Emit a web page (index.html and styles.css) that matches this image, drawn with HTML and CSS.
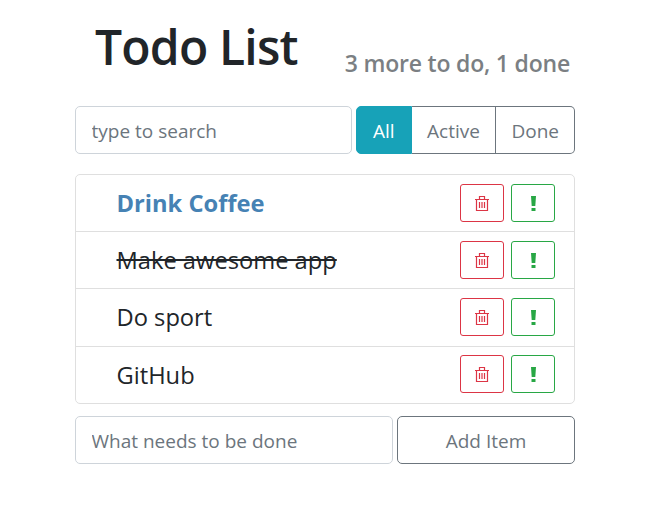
FILE: index.html
```html
<!DOCTYPE html>
<html lang="en">
<head>
    <meta charset="UTF-8">
    <title>Todo List</title>
    <link rel="stylesheet" href="styles.css">
</head>
<body>
    <div class="todo-app">
        <div class="app-header">
            <h1>Todo List</h1>
            <h2>3 more to do, 1 done</h2>
        </div>

        <div class="top-panel">
            <input type="text" class="form-input search-input" placeholder="type to search">
            <div class="filter-group">
                <button class="btn-filter active">All</button>
                <button class="btn-filter">Active</button>
                <button class="btn-filter">Done</button>
            </div>
        </div>

        <ul class="todo-list">
            <li class="todo-item">
                <span class="todo-label important">Drink Coffee</span>
                <button class="btn-icon btn-danger"><svg class="icon-trash" viewBox="0 0 14 15"><path d="M0 3.500h14M4.500 3V.5h5V3M1.500 3.500v11h11v-11M4.500 6v6M7 6v6M9.500 6v6"/></svg></button>
                <button class="btn-icon btn-success"><svg class="icon-mark" viewBox="0 0 5 15"><path d="M0 0h5L4.300 10H.7zM.5 12h4v3h-4z"/></svg></button>
            </li>
            <li class="todo-item">
                <span class="todo-label done">Make awesome app</span>
                <button class="btn-icon btn-danger"><svg class="icon-trash" viewBox="0 0 14 15"><path d="M0 3.500h14M4.500 3V.5h5V3M1.500 3.500v11h11v-11M4.500 6v6M7 6v6M9.500 6v6"/></svg></button>
                <button class="btn-icon btn-success"><svg class="icon-mark" viewBox="0 0 5 15"><path d="M0 0h5L4.300 10H.7zM.5 12h4v3h-4z"/></svg></button>
            </li>
            <li class="todo-item">
                <span class="todo-label">Do sport</span>
                <button class="btn-icon btn-danger"><svg class="icon-trash" viewBox="0 0 14 15"><path d="M0 3.500h14M4.500 3V.5h5V3M1.500 3.500v11h11v-11M4.500 6v6M7 6v6M9.500 6v6"/></svg></button>
                <button class="btn-icon btn-success"><svg class="icon-mark" viewBox="0 0 5 15"><path d="M0 0h5L4.300 10H.7zM.5 12h4v3h-4z"/></svg></button>
            </li>
            <li class="todo-item">
                <span class="todo-label">GitHub</span>
                <button class="btn-icon btn-danger"><svg class="icon-trash" viewBox="0 0 14 15"><path d="M0 3.500h14M4.500 3V.5h5V3M1.500 3.500v11h11v-11M4.500 6v6M7 6v6M9.500 6v6"/></svg></button>
                <button class="btn-icon btn-success"><svg class="icon-mark" viewBox="0 0 5 15"><path d="M0 0h5L4.300 10H.7zM.5 12h4v3h-4z"/></svg></button>
            </li>
        </ul>

        <form class="add-form">
            <input type="text" class="form-input add-input" placeholder="What needs to be done">
            <button type="button" class="btn-add">Add Item</button>
        </form>
    </div>
</body>
</html>
```

FILE: styles.css
```css
body { margin: 0; background: #fff; font-family: "Open Sans", "Noto Sans", sans-serif; color: #212529; }
.todo-app { width: 500px; margin-left: 75px; }
.app-header { display: flex; align-items: flex-end; height: 106px; padding-left: 20px; box-sizing: border-box; }
h1 { margin: 0 0 30px 0; font-size: 48px; line-height: 58px; font-weight: 600; letter-spacing: -0.8px; }
h2 { margin: 0 0 29px 47px; font-size: 23px; line-height: 28px; font-weight: 600; color: #7b7f83; letter-spacing: -0.2px; white-space: nowrap; }
.top-panel { display: flex; gap: 4px; }
.form-input { height: 48px; box-sizing: border-box; padding: 9px 16px 7px 15.5px; border: 1px solid #ced4da; border-radius: 5px; font-family: inherit; font-size: 19px; color: #495057; outline: none; }
.form-input::placeholder { color: #6c757d; opacity: 1; }
.search-input { flex: 1; min-width: 0; }
.filter-group { display: flex; }
.btn-filter { height: 48px; padding: 2px 15.5px 0; border: 1px solid #6c757d; border-left-width: 0; background: #fff; color: #6c757d; font-family: inherit; font-size: 19px; }
.btn-filter:first-child { border-left-width: 1px; border-radius: 5px 0 0 5px; padding: 2px 16px 0; }
.btn-filter:last-child { border-radius: 0 5px 5px 0; padding: 2px 15px 0; }
.btn-filter.active { background: #17a2b8; border-color: #17a2b8; color: #fff; }
.todo-list { list-style: none; margin: 20px 0 12px; padding: 0; border: 1px solid #dfdfdf; border-radius: 5px; }
.todo-item { display: flex; align-items: center; gap: 7px; height: 56px; padding: 0 19px 0 40.5px; border-top: 1px solid #dfdfdf; }
.todo-item:first-child { border-top: 0; }
.todo-item:nth-child(3) { height: 58px; box-sizing: border-box; padding-bottom: 1px; }
.todo-item:last-child { padding-bottom: 2px; height: 54px; }
.todo-item:last-child .todo-label { padding-top: 2px; }
.todo-label { flex: 1; font-size: 23.7px; }
.todo-label.important { color: #4682b4; font-weight: 700; }
.todo-label.done { text-decoration: line-through; }
.btn-icon { display: flex; align-items: center; justify-content: center; width: 44px; height: 38px; padding: 0; background: #fff; border: 1px solid; border-radius: 3px; }
.btn-danger { border-color: #dc3545; }
.btn-success { border-color: #28a745; }
.icon-trash { width: 14px; height: 15px; fill: none; stroke: #dc3545; stroke-width: 1.2; }
.icon-mark { width: 5px; height: 15px; fill: #28a745; }
.add-form { display: flex; gap: 4px; }
.add-input { flex: 1; min-width: 0; }
.btn-add { width: 178px; height: 48px; padding: 2px 0 0; border: 1px solid #6c757d; border-radius: 5px; background: #fff; color: #6c757d; font-family: inherit; font-size: 19px; }
```
